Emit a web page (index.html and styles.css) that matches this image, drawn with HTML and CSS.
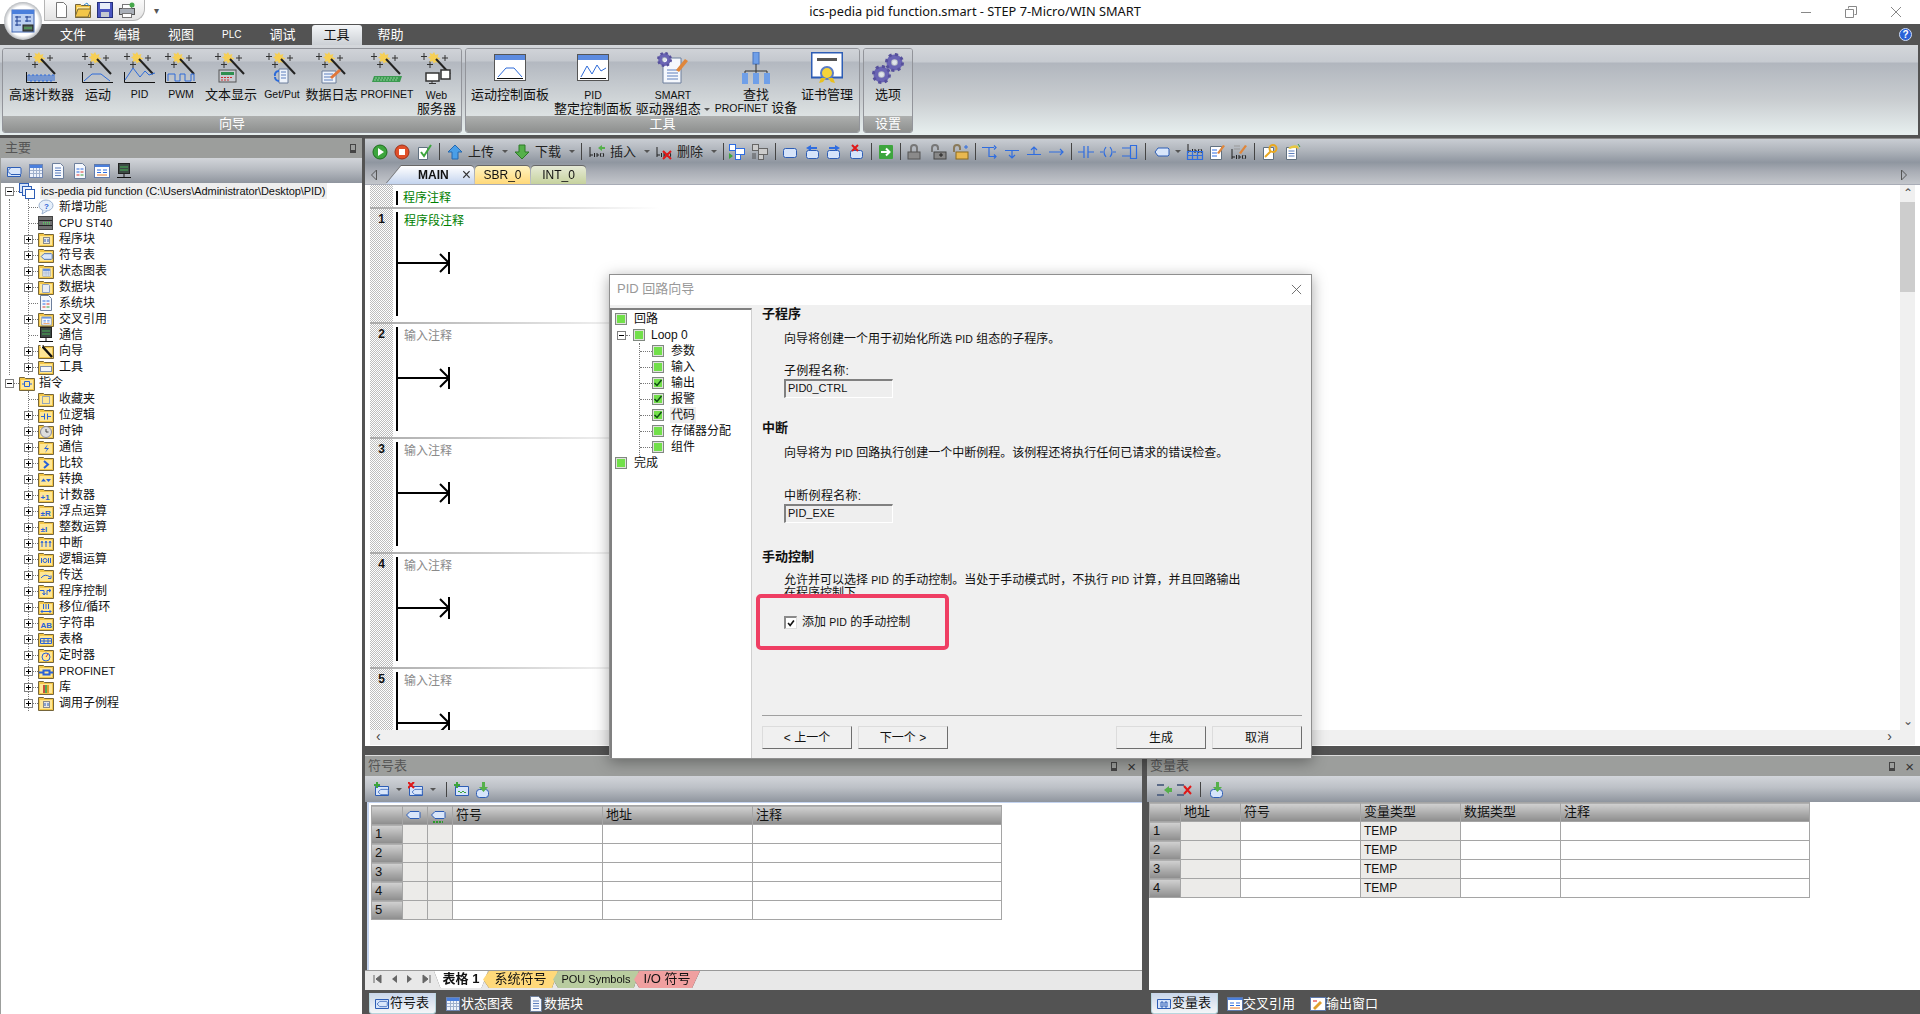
FILE: index.html
```html
<!DOCTYPE html>
<html lang="zh-CN">
<head>
    <meta charset="UTF-8">
    <title>ics-pedia pid function.smart - STEP 7-Micro/WIN SMART</title>
    <link rel="stylesheet" href="styles.css">
</head>
<body>
<svg class="sprite" aria-hidden="true">
    <symbol id="wand" viewBox="0 0 32 32">
        <path d="M3 1v7M0 4.500h6M9 9v7M6 12.500h6M24 3v6M21 6h6" stroke="#333" fill="none"/>
        <path d="M13 0l1.500 3 3-1-1 3 3 1.500-3 1.500 1 3-3-1L13 11.500 11.500 9l-3 1 1-3L7 5.500l2.500-1.500-1-3 3 1z" fill="#f6cf55"/>
        <path d="M15 7l14 15" stroke="#222" stroke-width="2"/>
    </symbol>
    <symbol id="axis" viewBox="0 0 32 32">
        <path d="M.5 20v10.500H31" stroke="#111" fill="none"/>
    </symbol>
    <symbol id="winchart" viewBox="0 0 32 32">
        <rect x=".5" y="2.500" width="31" height="26" fill="#fff" stroke="#555"/>
        <rect x="1" y="3" width="30" height="5" fill="#5c8be0"/>
        <path d="M3 26.500h26" stroke="#111"/>
    </symbol>
    <symbol id="gear" viewBox="0 0 20 20">
        <circle cx="10" cy="10" r="6" fill="none" stroke="#6a64b4" stroke-width="5"/>
        <circle cx="10" cy="10" r="8.500" fill="none" stroke="#56509c" stroke-width="3" stroke-dasharray="3.300 3.400"/>
        <circle cx="10" cy="10" r="2.500" fill="#dfe3ea"/>
    </symbol>
    <symbol id="folder" viewBox="0 0 16 16">
        <path d="M.5 2.500h5l1 1h9v12H.5z" fill="#f3c648" stroke="#75653a"/>
        <rect x="2" y="5" width="12" height="9" fill="#ffe795"/>
    </symbol>
    <symbol id="tag" viewBox="0 0 16 16">
        <path d="M1.500 8L5 4.500h9l1 1v5l-1 1H5z" fill="#d9e6fa" stroke="#2d5db5"/>
    </symbol>
    <symbol id="table" viewBox="0 0 16 16">
        <rect x="1.500" y="1.500" width="13" height="13" fill="#eef2fa" stroke="#6f86b2"/>
        <rect x="2" y="2" width="12" height="3" fill="#4a7fdc"/>
        <path d="M2 7.500h12M2 10.500h12M5.500 5v9M8.500 5v9M11.500 5v9" stroke="#9fb0cc"/>
    </symbol>
    <symbol id="doc" viewBox="0 0 16 16">
        <path d="M2.500 .5h8l3 3v12h-11z" fill="#f5f8fd" stroke="#6d7f9c"/>
        <path d="M5 5h6M5 7.500h6M5 10h6M5 12.500h6" stroke="#5d7fbd"/>
    </symbol>
    <symbol id="doccolor" viewBox="0 0 16 16">
        <path d="M2.500 .5h8l3 3v12h-11z" fill="#f5f8fd" stroke="#6d7f9c"/>
        <path d="M4.500 6h3M8.500 6h3M4.500 9h3" stroke="#2f6de0"/>
        <path d="M8.500 9h3M4.500 12h3" stroke="#e0392f"/>
        <path d="M8.500 12h3" stroke="#39a13a"/>
    </symbol>
    <symbol id="xref" viewBox="0 0 16 16">
        <rect x=".5" y="1.500" width="15" height="13" fill="#fff" stroke="#5f79aa"/>
        <rect x="1" y="2" width="14" height="2" fill="#4a7fdc"/>
        <path d="M3 7h4M9 7h4M3 9.500h4M9 9.500h4" stroke="#2f6de0"/>
        <path d="M3 12h10" stroke="#e87a2a"/>
    </symbol>
    <symbol id="comm" viewBox="0 0 16 16">
        <rect x="2.500" y=".5" width="11" height="10" fill="#3c4a44" stroke="#222"/>
        <path d="M4 4h8M4 7h8" stroke="#47b255"/>
        <path d="M8 11v3M1 14.500h14" stroke="#111"/>
    </symbol>
    <symbol id="step" viewBox="0 0 12 12">
        <rect x=".5" y=".5" width="11" height="11" fill="#dfe2dc" stroke="#808880"/>
        <rect x="2" y="2" width="8" height="8" fill="#72e04a"/>
    </symbol>
    <symbol id="stepdone" viewBox="0 0 12 12">
        <rect x=".5" y=".5" width="11" height="11" fill="#dfe2dc" stroke="#808880"/>
        <rect x="2" y="2" width="8" height="8" fill="#72e04a"/>
        <path d="M2.500 6l2.500 2.500L9.500 3" fill="none" stroke="#0c4a12" stroke-width="1.500"/>
    </symbol>
    <symbol id="ladder" viewBox="0 0 16 16">
        <path d="M1 3v10M1 11h3M5.500 9v4M8 9v4M8 11h2M12 9q-1.500 2 0 4M14 9q1.500 2 0 4" stroke="#222" fill="none"/>
    </symbol>
    <symbol id="windowblue" viewBox="0 0 16 16">
        <path d="M1.500 4.500h13v9h-13z" fill="#d6e4fa" stroke="#2d5db5"/>
    </symbol>
</svg>

<div class="logo">
    <svg viewBox="0 0 38 38"><rect x="8" y="8" width="22" height="22" fill="#bcd0f2" stroke="#3e64b0"/><rect x="8" y="8" width="22" height="4" fill="#4a7fdc"/><path d="M11 15h6M11 19h6M11 23h6M13 14v10M21 15h6M21 19h6M23 14v6" stroke="#1e3f90" fill="none"/><rect x="19" y="23" width="10" height="6" fill="#4f5f55" stroke="#222"/><path d="M20 26h8" stroke="#56c060"/></svg>
</div>

<header class="titlebar">
    <div class="qat">
        <svg class="ic16" viewBox="0 0 16 16"><path d="M3.500 .5h7l3 3v12h-10z" fill="#fff" stroke="#777"/></svg>
        <svg class="ic16" viewBox="0 0 16 16"><use href="#folder"/><path d="M3 7h13l-3 8H0z" fill="#f3c648" stroke="#7a6a3a"/><path d="M9 3l3-2 2 3" stroke="#3a8fd0" fill="none"/></svg>
        <svg class="ic16" viewBox="0 0 16 16"><rect x=".5" y=".5" width="15" height="15" fill="#4a55c0" stroke="#24307a"/><rect x="3" y="1" width="10" height="6" fill="#e8edf8"/><rect x="4" y="10" width="8" height="5" fill="#c4c8d0"/></svg>
        <svg class="ic16" viewBox="0 0 16 16"><rect x=".5" y="6.500" width="15" height="6" fill="#a9afb8" stroke="#555"/><rect x="3.500" y="2.500" width="9" height="4" fill="#fff" stroke="#777"/><rect x="3.500" y="11.500" width="9" height="4" fill="#fff" stroke="#777"/><circle cx="13" cy="3" r="2.500" fill="#46a84b"/></svg>
    </div>
    <span class="qat-more">▾</span>
    <div class="title">ics-pedia pid function.smart - STEP 7-Micro/WIN SMART</div>
    <div class="winbtns">
        <span class="winbtn"><svg viewBox="0 0 12 12"><path d="M1 6.500h10" stroke="#888"/></svg></span>
        <span class="winbtn"><svg viewBox="0 0 12 12"><path d="M3.500 2.500v-2h8v8h-2M.5 3.500h8v8h-8z" fill="none" stroke="#888"/></svg></span>
        <span class="winbtn"><svg viewBox="0 0 12 12"><path d="M1 1l10 10M11 1L1 11" stroke="#888"/></svg></span>
    </div>
</header>

<nav class="menubar">
    <span class="menu">文件</span>
    <span class="menu">编辑</span>
    <span class="menu">视图</span>
    <span class="menu menu-plc">PLC</span>
    <span class="menu">调试</span>
    <span class="menu menu-on">工具</span>
    <span class="menu">帮助</span>
    <span class="help">?</span>
</nav>

<section class="ribbon">
    <div class="rgroup rg-wizard">
        <div class="rbody">
            <div class="rbtn w71"><svg class="ic32" viewBox="0 0 32 32"><use href="#wand"/><use href="#axis"/><path d="M2 29v-6h2v6h2v-6h2v6h2v-6h2v6h2v-6h2v6h2v-6h2v6h2v-6h2v6h2v-6h2v6" fill="none" stroke="#2e6bd8"/></svg><span>高速计数器</span></div>
            <div class="rbtn w42"><svg class="ic32" viewBox="0 0 32 32"><use href="#wand"/><use href="#axis"/><path d="M2 29l8-7h9l9 7" fill="none" stroke="#2e6bd8"/></svg><span>运动</span></div>
            <div class="rbtn w41"><svg class="ic32" viewBox="0 0 32 32"><use href="#wand"/><use href="#axis"/><path d="M1 28l8-12 7 9 5-6 4 4 6-2" fill="none" stroke="#2e6bd8"/></svg><span class="lat">PID</span></div>
            <div class="rbtn w42"><svg class="ic32" viewBox="0 0 32 32"><use href="#wand"/><use href="#axis"/><path d="M3 29v-7h7v7h5v-7h5v7h6v-7h3v7" fill="none" stroke="#2e6bd8"/></svg><span class="lat">PWM</span></div>
            <div class="rbtn w58"><svg class="ic32" viewBox="0 0 32 32"><use href="#wand"/><rect x="4" y="18" width="17" height="12" fill="#c9ccd2" stroke="#555"/><rect x="6" y="20" width="13" height="3" fill="#2f8f4f"/><path d="M6 25.500h2m1 0h2m1 0h2m1 0h2M6 28h2m1 0h2m1 0h2" stroke="#c33"/></svg><span>文本显示</span></div>
            <div class="rbtn w44"><svg class="ic32" viewBox="0 0 32 32"><use href="#wand"/><path d="M13 17h9v14h-9z" fill="#eef3fb" stroke="#6d7f9c"/><path d="M15 20h5M15 23h5M15 26h5" stroke="#5d7fbd"/><path d="M9 24a4 4 0 0 1 4-5M13 29a4 4 0 0 1-4-4" stroke="#2e6bd8" stroke-width="2" fill="none"/></svg><span class="lat">Get/Put</span></div>
            <div class="rbtn w55"><svg class="ic32" viewBox="0 0 32 32"><use href="#wand"/><path d="M6 19h14v12H6z" fill="#eef3fb" stroke="#6d7f9c"/><path d="M8 22h9M8 25h9M8 28h9" stroke="#5d7fbd"/><path d="M14 25l9-8 2 2-9 8z" fill="#e0763a"/></svg><span>数据日志</span></div>
            <div class="rbtn w56"><svg class="ic32" viewBox="0 0 32 32"><use href="#wand"/><path d="M3 24h28l-2 6H1z" fill="#3b9a50"/><path d="M4 26h24M3 28h24" stroke="#8fd09a" stroke-dasharray="2 1"/></svg><span class="lat">PROFINET</span></div>
            <div class="rbtn w43"><svg class="ic32" viewBox="0 0 32 32"><use href="#wand"/><rect x="5" y="21" width="13" height="8" fill="#fff" stroke="#333" stroke-width="1.500"/><rect x="20" y="18" width="9" height="9" fill="#fff" stroke="#333" stroke-width="1.500"/><path d="M11 29v2M8 31.500h7" stroke="#333"/></svg><span><b class="lat">Web</b><br>服务器</span></div>
        </div>
        <div class="rlabel">向导</div>
    </div>
    <div class="rgroup rg-tools">
        <div class="rbody">
            <div class="rbtn w82"><svg class="ic32" viewBox="0 0 32 32"><use href="#winchart"/><path d="M4 25l8-9h8l8 9" fill="none" stroke="#2e6bd8"/></svg><span>运动控制面板</span></div>
            <div class="rbtn w84"><svg class="ic32" viewBox="0 0 32 32"><use href="#winchart"/><path d="M4 25l6-11 5 8 5-9 4 6 5-3" fill="none" stroke="#2e6bd8"/></svg><span><b class="lat">PID</b><br>整定控制面板</span></div>
            <div class="rbtn w76"><svg class="ic32" viewBox="0 0 32 32"><path d="M6 6h18v25H6z" fill="#f5f8fd" stroke="#6d7f9c"/><path d="M10 18h11M10 21h11M10 24h11M10 27h11" stroke="#5d7fbd"/><use href="#gear" width="15" height="15" x="0" y="0"/><path d="M19 18l9-11 3 2-9 11z" fill="#e0863a"/></svg><span><b class="lat">SMART</b><br>驱动器组态 <i class="caret"></i></span></div>
            <div class="rbtn w90"><svg class="ic32" viewBox="0 0 32 32"><rect x="13" y="0" width="6" height="12" fill="#6f9fe8" stroke="#4a76c0"/><path d="M16 12v7M5 19h22M5 19v3M16 19v3M27 19v3" stroke="#333" fill="none"/><rect x="2" y="21" width="6" height="11" fill="#6f9fe8"/><rect x="13" y="21" width="6" height="11" fill="#6f9fe8"/><rect x="24" y="21" width="6" height="11" fill="#6f9fe8"/></svg><span>查找<br><b class="lat">PROFINET</b> 设备</span></div>
            <div class="rbtn w52"><svg class="ic32" viewBox="0 0 32 32"><rect x=".5" y=".5" width="31" height="25" fill="#fff" stroke="#2d5db5" stroke-width="2"/><rect x="6" y="6" width="20" height="3" fill="#555"/><circle cx="16" cy="21" r="6" fill="#f5d33a" stroke="#5a7cc5" stroke-width="2"/><path d="M10 26l-2 5 4-1 3-4M22 26l2 5-4-1-3-4" fill="#e7c020"/></svg><span>证书管理</span></div>
        </div>
        <div class="rlabel">工具</div>
    </div>
    <div class="rgroup rg-set">
        <div class="rbody">
            <div class="rbtn w44"><svg class="ic32" viewBox="0 0 32 32"><use href="#gear" width="19" height="19" x="0" y="13"/><use href="#gear" width="19" height="19" x="13" y="1"/></svg><span>选项</span></div>
        </div>
        <div class="rlabel">设置</div>
    </div>
</section>

<main class="workspace">
    <aside class="nav">
        <div class="panehead"><span>主要</span><i class="pin"></i></div>
        <div class="paletools">
            <svg class="ic16" viewBox="0 0 16 16"><use href="#windowblue"/><use href="#tag"/></svg>
            <svg class="ic16" viewBox="0 0 16 16"><use href="#table"/></svg>
            <svg class="ic16" viewBox="0 0 16 16"><use href="#doc"/></svg>
            <svg class="ic16" viewBox="0 0 16 16"><use href="#doccolor"/></svg>
            <svg class="ic16" viewBox="0 0 16 16"><use href="#xref"/></svg>
            <svg class="ic16" viewBox="0 0 16 16"><use href="#comm"/></svg>
        </div>
        <div class="tree">
            <div class="row root"><i class="twist minus"></i><i class="dash"></i><svg class="ic16" viewBox="0 0 16 16"><rect x=".5" y=".5" width="9" height="9" fill="#d6e4fa" stroke="#2d5db5"/><rect x="3.500" y="3.500" width="9" height="9" fill="#eaf1fd" stroke="#2d5db5"/><rect x="6.500" y="6.500" width="9" height="9" fill="#fff" stroke="#2d5db5"/></svg><span class="name project">ics-pedia pid function (C:\Users\Administrator\Desktop\PID)</span></div>
            <div class="branch">
                <div class="inner">
                    <div class="row"><i class="dash long"></i><svg class="ic16" viewBox="0 0 16 16"><ellipse cx="8" cy="6.500" rx="7" ry="5.500" fill="#e6effa" stroke="#9db3d0"/><path d="M5 11l-1 4 5-3" fill="#e6effa" stroke="#9db3d0"/><text class="mark-text" x="6" y="10">?</text></svg><span class="name">新增功能</span></div>
                    <div class="row"><i class="dash long"></i><svg class="ic16" viewBox="0 0 16 16"><rect x=".5" y="1.500" width="14" height="13" fill="#707070" stroke="#444"/><path d="M1 5.500h13M1 10.500h13" stroke="#222"/><path d="M5 7.500h8M5 9h8" stroke="#57d060" stroke-dasharray="1 1"/></svg><span class="name lat-name">CPU ST40</span></div>
                    <div class="row"><i class="twist"></i><i class="dash"></i><svg class="ic16" viewBox="0 0 16 16"><use href="#folder"/><rect x="5.500" y="6.500" width="6" height="6" fill="#e7e7e7" stroke="#8a8a8a"/><path d="M7 8v3M10 8v3" stroke="#2d5db5"/></svg><span class="name">程序块</span></div>
                    <div class="row"><i class="twist"></i><i class="dash"></i><svg class="ic16" viewBox="0 0 16 16"><use href="#folder"/><use href="#tag" width="13" height="13" x="2" y="3"/></svg><span class="name">符号表</span></div>
                    <div class="row"><i class="twist"></i><i class="dash"></i><svg class="ic16" viewBox="0 0 16 16"><use href="#folder"/><use href="#table" width="11" height="9" x="3" y="5"/></svg><span class="name">状态图表</span></div>
                    <div class="row"><i class="twist"></i><i class="dash"></i><svg class="ic16" viewBox="0 0 16 16"><use href="#folder"/><path d="M4.500 5.500h6l1 1v7h-7z" fill="#e7ecf4" stroke="#8fa0bc"/></svg><span class="name">数据块</span></div>
                    <div class="row"><i class="dash long"></i><svg class="ic16" viewBox="0 0 16 16"><use href="#doccolor"/></svg><span class="name">系统块</span></div>
                    <div class="row"><i class="twist"></i><i class="dash"></i><svg class="ic16" viewBox="0 0 16 16"><use href="#folder"/><use href="#xref" width="11" height="10" x="3" y="5"/></svg><span class="name">交叉引用</span></div>
                    <div class="row"><i class="dash long"></i><svg class="ic16" viewBox="0 0 16 16"><use href="#comm"/></svg><span class="name">通信</span></div>
                    <div class="row"><i class="twist"></i><i class="dash"></i><svg class="ic16" viewBox="0 0 16 16"><use href="#folder"/><path d="M4 3l10 11" stroke="#111" stroke-width="2.500"/><path d="M2 3h3M3.500 1v4" stroke="#fff"/></svg><span class="name">向导</span></div>
                    <div class="row"><i class="twist"></i><i class="dash"></i><svg class="ic16" viewBox="0 0 16 16"><use href="#folder"/><rect x="2.500" y="7.500" width="11" height="5" fill="#f4f6fa" stroke="#7f90ad"/></svg><span class="name">工具</span></div>
                </div>
            </div>
            <div class="row root"><i class="twist minus"></i><i class="dash"></i><svg class="ic16" viewBox="0 0 16 16"><use href="#folder"/><path class="mk" d="M3 9h2M11 9h2M5.500 6.500h5v5h-5z"/></svg><span class="name">指令</span></div>
            <div class="branch noline">
                <div class="inner">
                    <div class="row"><i class="dash long"></i><svg class="ic16" viewBox="0 0 16 16"><use href="#folder"/><rect class="mk dotted" x="4.500" y="5.500" width="7" height="7"/></svg><span class="name">收藏夹</span></div>
                    <div class="row"><i class="twist"></i><i class="dash"></i><svg class="ic16" viewBox="0 0 16 16"><use href="#folder"/><path class="mk" d="M3 9.500h3M6.500 6.500v6M9.500 6.500v6M10 9.500h3"/></svg><span class="name">位逻辑</span></div>
                    <div class="row"><i class="twist"></i><i class="dash"></i><svg class="ic16" viewBox="0 0 16 16"><use href="#folder"/><circle cx="8" cy="9" r="5.500" fill="#ddd" stroke="#8a8a9a"/><path d="M8 6v3h2.500" stroke="#444" fill="none"/></svg><span class="name">时钟</span></div>
                    <div class="row"><i class="twist"></i><i class="dash"></i><svg class="ic16" viewBox="0 0 16 16"><use href="#folder"/><path d="M10 5L6 10h3l-2 4 4-5H8z" fill="#2a62d8"/></svg><span class="name">通信</span></div>
                    <div class="row"><i class="twist"></i><i class="dash"></i><svg class="ic16" viewBox="0 0 16 16"><use href="#folder"/><path class="mk thick" d="M6 6l4 3.500L6 13"/></svg><span class="name">比较</span></div>
                    <div class="row"><i class="twist"></i><i class="dash"></i><svg class="ic16" viewBox="0 0 16 16"><use href="#folder"/><path d="M3 10.500l2.500-3 2.500 3zM8 8h5l-2.500 3z" fill="#2a62d8"/></svg><span class="name">转换</span></div>
                    <div class="row"><i class="twist"></i><i class="dash"></i><svg class="ic16" viewBox="0 0 16 16"><use href="#folder"/><text class="mark-text" x="2.500" y="12.500">+1</text></svg><span class="name">计数器</span></div>
                    <div class="row"><i class="twist"></i><i class="dash"></i><svg class="ic16" viewBox="0 0 16 16"><use href="#folder"/><text class="mark-text" x="2.500" y="12.500">±R</text></svg><span class="name">浮点运算</span></div>
                    <div class="row"><i class="twist"></i><i class="dash"></i><svg class="ic16" viewBox="0 0 16 16"><use href="#folder"/><text class="mark-text" x="2.500" y="12.500">±I</text></svg><span class="name">整数运算</span></div>
                    <div class="row"><i class="twist"></i><i class="dash"></i><svg class="ic16" viewBox="0 0 16 16"><use href="#folder"/><path class="mk" d="M4 7v5M8 7v5M12 7v5M3 8l1-2 1 2M7 8l1-2 1 2M11 8l1-2 1 2"/></svg><span class="name">中断</span></div>
                    <div class="row"><i class="twist"></i><i class="dash"></i><svg class="ic16" viewBox="0 0 16 16"><use href="#folder"/><path class="mk" d="M3.500 7v5M10.500 7v5M12.500 7v5"/><circle class="mk" cx="7" cy="9.500" r="2"/></svg><span class="name">逻辑运算</span></div>
                    <div class="row"><i class="twist"></i><i class="dash"></i><svg class="ic16" viewBox="0 0 16 16"><use href="#folder"/><path class="mk" d="M3 11q4-5 9-1M10 11.500h3v-3"/></svg><span class="name">传送</span></div>
                    <div class="row"><i class="twist"></i><i class="dash"></i><svg class="ic16" viewBox="0 0 16 16"><use href="#folder"/><path class="mk" d="M2 7.500h4v4M4.500 10l1.500 2 1.500-2M9 12V7.500h4M11 6l2 1.500L11 9"/></svg><span class="name">程序控制</span></div>
                    <div class="row"><i class="twist"></i><i class="dash"></i><svg class="ic16" viewBox="0 0 16 16"><use href="#folder"/><path class="mk" d="M5.500 5v5M8 5v5M10.500 5v5M3 12.500h10M4.500 11L3 12.500 4.500 14M11.500 11l1.500 1.500-1.500 1.500"/></svg><span class="name">移位/循环</span></div>
                    <div class="row"><i class="twist"></i><i class="dash"></i><svg class="ic16" viewBox="0 0 16 16"><use href="#folder"/><text class="mark-text" x="2.500" y="12.500">AB</text></svg><span class="name">字符串</span></div>
                    <div class="row"><i class="twist"></i><i class="dash"></i><svg class="ic16" viewBox="0 0 16 16"><use href="#folder"/><path class="mk" d="M2.500 7.500h11v5h-11zM2.500 10h11M6 7.500v5M10 7.500v5"/></svg><span class="name">表格</span></div>
                    <div class="row"><i class="twist"></i><i class="dash"></i><svg class="ic16" viewBox="0 0 16 16"><use href="#folder"/><circle class="mk" cx="8" cy="10" r="4"/><path d="M8 10l2-3" stroke="#d33"/></svg><span class="name">定时器</span></div>
                    <div class="row"><i class="twist"></i><i class="dash"></i><svg class="ic16" viewBox="0 0 16 16"><use href="#folder"/><path class="mk thick" d="M1 9.500h4M5.500 7.500h6v4h-6zM11 9.500h4"/></svg><span class="name lat-name">PROFINET</span></div>
                    <div class="row"><i class="twist"></i><i class="dash"></i><svg class="ic16" viewBox="0 0 16 16"><use href="#folder"/><rect x="5" y="6" width="2" height="8" fill="#c9503a"/><rect x="7" y="6" width="2" height="8" fill="#5aa84f"/><rect x="9" y="6" width="2" height="8" fill="#e0a030"/></svg><span class="name">库</span></div>
                    <div class="row"><i class="twist"></i><i class="dash"></i><svg class="ic16" viewBox="0 0 16 16"><use href="#folder"/><rect x="5.500" y="6.500" width="6" height="6" fill="#e7e7e7" stroke="#8a8a8a"/><path d="M7 8v3M10 8v3" stroke="#2d5db5"/></svg><span class="name">调用子例程</span></div>
                </div>
            </div>
        </div>
    </aside>

    <div class="right">
        <section class="editor">
            <div class="edbar">
                <div class="toolbar">
                    <svg class="tb" viewBox="0 0 16 16"><circle cx="8" cy="8" r="7" fill="#3da53d" stroke="#1e6d1e"/><path d="M6 4l6 4-6 4z" fill="#fff"/></svg>
                    <svg class="tb" viewBox="0 0 16 16"><circle cx="8" cy="8" r="7" fill="#e0502a" stroke="#a0301a"/><rect x="5" y="5" width="6" height="6" fill="#fff"/></svg>
                    <svg class="tb" viewBox="0 0 16 16"><path d="M2.500 3.500h9v12h-9z" fill="#fff" stroke="#607080"/><path d="M5 8l3 4 7-11" fill="none" stroke="#3da53d" stroke-width="2"/></svg>
                    <i class="sep"></i>
                    <svg class="tb m1" viewBox="0 0 16 16"><path d="M8 1l7 7h-4v7H5V8H1z" fill="#4a9fe8" stroke="#2468b0"/></svg>
                    <span class="tbtext">上传</span><i class="dd"></i>
                    <svg class="tb" viewBox="0 0 16 16"><path d="M8 15l7-7h-4V1H5v7H1z" fill="#55b04a" stroke="#2e7a28"/></svg>
                    <span class="tbtext">下载</span><i class="dd"></i>
                    <i class="sep sm"></i>
                    <svg class="tb m2" viewBox="0 0 16 16"><use href="#ladder"/><path d="M13 1l-4 3 4 3v-2h3V3h-3z" fill="#55b04a"/></svg>
                    <span class="tbtext">插入</span><i class="dd"></i>
                    <svg class="tb" viewBox="0 0 16 16"><use href="#ladder"/><path d="M7 7l8 8M15 7l-8 8" stroke="#e01818" stroke-width="2"/></svg>
                    <span class="tbtext">删除</span><i class="dd"></i>
                    <i class="sep sm"></i>
                    <svg class="tb" viewBox="0 0 16 16"><rect x=".5" y=".5" width="6" height="6" fill="#fff" stroke="#2f6de0"/><rect x="6.500" y="4.500" width="9" height="6" fill="#fff" stroke="#2f6de0"/><rect x="6.500" y="10.500" width="5" height="5" fill="#fff" stroke="#2f6de0"/><path d="M0 9l4 3-4 3z" fill="#3da53d"/></svg>
                    <svg class="tb m1" viewBox="0 0 16 16"><rect x=".5" y=".5" width="6" height="6" fill="#ccc" stroke="#666"/><rect x="6.500" y="4.500" width="9" height="6" fill="#ccc" stroke="#666"/><rect x="6.500" y="10.500" width="5" height="5" fill="#ccc" stroke="#666"/><path d="M1 9v6M3 9v6" stroke="#555"/></svg>
                    <i class="sep"></i>
                    <svg class="tb" viewBox="0 0 16 16"><rect x="1.500" y="4.500" width="13" height="9" rx="2" fill="#d6e4fa" stroke="#2d5db5"/></svg>
                    <svg class="tb" viewBox="0 0 16 16"><rect x="2.500" y="6.500" width="12" height="8" rx="2" fill="#d6e4fa" stroke="#2d5db5"/><path d="M7 1L2 4l5 3V5h6V3H7z" fill="#2f6de0"/></svg>
                    <svg class="tb" viewBox="0 0 16 16"><rect x="1.500" y="6.500" width="12" height="8" rx="2" fill="#d6e4fa" stroke="#2d5db5"/><path d="M9 1l5 3-5 3V5H3V3h6z" fill="#2f6de0"/></svg>
                    <svg class="tb" viewBox="0 0 16 16"><rect x="2.500" y="6.500" width="12" height="8" rx="2" fill="#d6e4fa" stroke="#2d5db5"/><path d="M4 1l6 6M10 1L4 7" stroke="#e01818" stroke-width="2"/></svg>
                    <i class="sep"></i>
                    <svg class="tb" viewBox="0 0 16 16"><rect x="1" y="1" width="14" height="14" rx="1" fill="#3da53d"/><path d="M3 8h8M8 4.500L11.500 8 8 11.500" stroke="#fff" stroke-width="2" fill="none"/></svg>
                    <i class="sep sm"></i>
                    <svg class="tb" viewBox="0 0 16 16"><path d="M5 8V4a3 3 0 0 1 6 0v4" fill="none" stroke="#777" stroke-width="2"/><rect x="2" y="8" width="12" height="7" fill="#8a8a8a" stroke="#555"/></svg>
                    <svg class="tb m3" viewBox="0 0 16 16"><path d="M1 8V4a3 3 0 0 1 6 0v2" fill="none" stroke="#777" stroke-width="2"/><rect x="3" y="8" width="12" height="7" fill="#888" stroke="#444"/><path d="M8 11h4M10 9v4" stroke="#222"/></svg>
                    <svg class="tb" viewBox="0 0 16 16"><path d="M1 8V4a3 3 0 0 1 6 0v2" fill="none" stroke="#8a7a5a" stroke-width="2"/><rect x="3" y="8" width="12" height="7" fill="#e8b850" stroke="#8a6a20"/><path d="M11 3h4M13 1v4" stroke="#2f6de0"/></svg>
                    <i class="sep sm"></i>
                    <svg class="tb" viewBox="0 0 16 16"><path class="bl" d="M1 3.500h7v9h7M8 3.500h5M8 12.500h5M13 1.500l2 2-2 2M13 10.500l2 2-2 2"/></svg>
                    <svg class="tb m1" viewBox="0 0 16 16"><path class="bl" d="M1 6.500h14M8 6.500v7M5 11l3 3 3-3"/></svg>
                    <svg class="tb" viewBox="0 0 16 16"><path class="bl" d="M1 10.500h14M8 10.500v-7M5 6l3-3 3 3"/></svg>
                    <svg class="tb" viewBox="0 0 16 16"><path class="bl" d="M1 8h14M12 5l3 3-3 3"/></svg>
                    <i class="sep"></i>
                    <svg class="tb" viewBox="0 0 16 16"><path class="bl" d="M0 8h6M6 2v12M10 2v12M10 8h6"/></svg>
                    <svg class="tb" viewBox="0 0 16 16"><path class="bl" d="M0 8h3M13 8h3M6 3q-4 5 0 10M10 3q4 5 0 10"/></svg>
                    <svg class="tb" viewBox="0 0 16 16"><path class="bl" d="M0 4h8M0 12h8M8.500 1.500h6v13h-6z"/></svg>
                    <i class="sep"></i>
                    <svg class="tb m2" viewBox="0 0 16 16"><path d="M1 8l3-4h10l1 1v6l-1 1H4z" fill="#d9e6fa" stroke="#2d5db5"/></svg>
                    <i class="dd narrow"></i>
                    <svg class="tb m1" viewBox="0 0 16 16"><use href="#ladder" y="-4"/><path class="bl" d="M.5 7.500h15v8H.5zM.5 11.500h15M5.500 7.500v8M10.500 7.500v8"/></svg>
                    <svg class="tb" viewBox="0 0 16 16"><path d="M1.500 2.500h11v13h-11z" fill="#fff" stroke="#607080"/><path d="M3 6h5M3 9h5M3 12h5" stroke="#2f6de0"/><path d="M8 9l6-8 2 1-6 8z" fill="#e0863a"/></svg>
                    <svg class="tb" viewBox="0 0 16 16"><use href="#ladder" y="2"/><path d="M3 2h6M3 5h6" stroke="#999"/><path d="M8 9l6-8 2 1-6 8z" fill="#e0863a"/></svg>
                    <i class="sep"></i>
                    <svg class="tb m1" viewBox="0 0 16 16"><path d="M1.500 3.500h10v12h-10z" fill="#fff" stroke="#607080"/><circle cx="11" cy="4.500" r="3.500" fill="none" stroke="#e8a820" stroke-width="2"/><path d="M9 7l-6 6" stroke="#e8a820" stroke-width="2"/></svg>
                    <svg class="tb" viewBox="0 0 16 16"><path d="M2.500 3.500h10v12h-10z" fill="#fff" stroke="#607080"/><path d="M4.500 7h6M4.500 9.500h6M4.500 12h6" stroke="#5d7fbd"/><path d="M4 4q5-4 10-2l1 3q-5-2-9 0z" fill="#e8c840"/><path d="M14 0l2 3" stroke="#3da53d"/></svg>
                </div>
                <div class="tabline">
                    <svg class="tabarrow" viewBox="0 0 8 12"><path d="M6.500 1l-5 5 5 5z" fill="none" stroke="#555"/></svg>
                    <div class="ptabs">
                        <span class="ptab ptab-main"><b>MAIN</b><em>×</em></span>
                        <span class="ptab ptab-sbr">SBR_0</span>
                        <span class="ptab ptab-int">INT_0</span>
                    </div>
                    <svg class="tabarrow end" viewBox="0 0 8 12"><path d="M1.500 1l5 5-5 5z" fill="none" stroke="#555"/></svg>
                </div>
            </div>
            <div class="canvas">
                <div class="sheet">
                    <div class="progcomment"><span class="gutter"></span><span class="note green bar">程序注释</span></div>
                    <div class="network"><span class="gutter num">1</span><div class="rung"><span class="note green">程序段注释</span><svg class="wire" viewBox="0 0 52 22"><path d="M0 11h51M51 0v22M42 2l9 9-9 9" fill="none" stroke="#000" stroke-width="2"/></svg></div></div>
                    <div class="network"><span class="gutter num">2</span><div class="rung"><span class="note">输入注释</span><svg class="wire" viewBox="0 0 52 22"><path d="M0 11h51M51 0v22M42 2l9 9-9 9" fill="none" stroke="#000" stroke-width="2"/></svg></div></div>
                    <div class="network"><span class="gutter num">3</span><div class="rung"><span class="note">输入注释</span><svg class="wire" viewBox="0 0 52 22"><path d="M0 11h51M51 0v22M42 2l9 9-9 9" fill="none" stroke="#000" stroke-width="2"/></svg></div></div>
                    <div class="network"><span class="gutter num">4</span><div class="rung"><span class="note">输入注释</span><svg class="wire" viewBox="0 0 52 22"><path d="M0 11h51M51 0v22M42 2l9 9-9 9" fill="none" stroke="#000" stroke-width="2"/></svg></div></div>
                    <div class="network"><span class="gutter num">5</span><div class="rung"><span class="note">输入注释</span><svg class="wire" viewBox="0 0 52 22"><path d="M0 11h51M51 0v22M42 2l9 9-9 9" fill="none" stroke="#000" stroke-width="2"/></svg></div></div>
                </div>
                <div class="vscroll">
                    <span class="sbtn">⌃</span>
                    <span class="vthumb"></span>
                    <span class="vtrack"></span>
                    <span class="sbtn">⌄</span>
                </div>
            </div>
            <div class="hscroll"><span>‹</span><span>›</span></div>
        </section>

        <section class="docks">
            <div class="dock dock-left">
                <div class="panehead"><span>符号表</span><i class="pin"></i><i class="xclose">×</i></div>
                <div class="paletools dock-tools">
                    <svg class="ic16" viewBox="0 0 16 16"><use href="#windowblue"/><use href="#tag" width="12" height="12" x="3" y="4"/><path d="M3 0v6M0 3h6" stroke="#3da53d" stroke-width="2"/></svg><i class="dd"></i>
                    <svg class="ic16" viewBox="0 0 16 16"><use href="#windowblue"/><use href="#tag" width="12" height="12" x="3" y="4"/><path d="M0 0l6 6M6 0L0 6" stroke="#e01818" stroke-width="2"/></svg><i class="dd"></i>
                    <i class="sep"></i>
                    <svg class="ic16" viewBox="0 0 16 16"><use href="#windowblue"/><path d="M4 10q1-2 2 0t2 0 2 0 2 0" stroke="#3da53d" fill="none"/><path d="M3 0v6M0 3h6" stroke="#3da53d" stroke-width="2"/></svg>
                    <svg class="ic16" viewBox="0 0 16 16"><rect x="2.500" y="7.500" width="12" height="8" rx="3" fill="#d6e4fa" stroke="#2d5db5"/><path d="M8 0h3v5h3l-4.500 5L5 5h3z" fill="#55b04a"/></svg>
                </div>
                <div class="client">
                    <table class="grid grid-sym">
                        <tr><th></th><th><svg class="ic16" viewBox="0 0 16 16"><use href="#tag"/></svg></th><th><svg class="ic16" viewBox="0 0 16 16"><use href="#tag"/><path d="M3 15h10" stroke="#2a9a2a" stroke-width="2" stroke-dasharray="2 1"/></svg></th><th>符号</th><th>地址</th><th>注释</th></tr>
                        <tr><th>1</th><td class="ro"></td><td class="ro"></td><td></td><td></td><td></td></tr>
                        <tr><th>2</th><td class="ro"></td><td class="ro"></td><td></td><td></td><td></td></tr>
                        <tr><th>3</th><td class="ro"></td><td class="ro"></td><td></td><td></td><td></td></tr>
                        <tr><th>4</th><td class="ro"></td><td class="ro"></td><td></td><td></td><td></td></tr>
                        <tr><th>5</th><td class="ro"></td><td class="ro"></td><td></td><td></td><td></td></tr>
                    </table>
                </div>
                <div class="sheettabs">
                    <svg class="navarrow" viewBox="0 0 16 16"><path d="M4 4v8M11 4L6 8l5 4z" fill="#666" stroke="#666"/></svg>
                    <svg class="navarrow" viewBox="0 0 16 16"><path d="M11 4L6 8l5 4z" fill="#666"/></svg>
                    <svg class="navarrow" viewBox="0 0 16 16"><path d="M5 4l5 4-5 4z" fill="#666"/></svg>
                    <svg class="navarrow" viewBox="0 0 16 16"><path d="M12 4v8M5 4l5 4-5 4z" fill="#666" stroke="#666"/></svg>
                    <div class="stabs">
                        <span class="stab stab-on">表格 1</span>
                        <span class="stab stab-sys">系统符号</span>
                        <span class="stab stab-pou">POU Symbols</span>
                        <span class="stab stab-io">I/O 符号</span>
                    </div>
                </div>
                <div class="status">
                    <span class="stat stat-on"><svg class="ic16" viewBox="0 0 16 16"><use href="#windowblue"/><use href="#tag" width="12" height="12" x="2" y="3"/></svg>符号表</span>
                    <span class="stat"><svg class="ic16" viewBox="0 0 16 16"><use href="#table"/></svg>状态图表</span>
                    <span class="stat"><svg class="ic16" viewBox="0 0 16 16"><use href="#doc"/></svg>数据块</span>
                </div>
            </div>
            <div class="dock dock-right">
                <div class="panehead"><span>变量表</span><i class="pin"></i><i class="xclose">×</i></div>
                <div class="paletools dock-tools">
                    <svg class="ic16" viewBox="0 0 16 16"><path d="M1 3h7M1 13h7" stroke="#5a6a88" stroke-width="2"/><path d="M8 8l5-4v2h3v4h-3v2z" fill="#55b04a"/></svg>
                    <svg class="ic16" viewBox="0 0 16 16"><path d="M1 3h7M1 13h7" stroke="#5a6a88" stroke-width="2"/><path d="M8 4l7 8M15 4l-7 8" stroke="#e01818" stroke-width="2"/></svg>
                    <i class="sep"></i>
                    <svg class="ic16" viewBox="0 0 16 16"><rect x="2.500" y="7.500" width="12" height="8" rx="3" fill="#d6e4fa" stroke="#2d5db5"/><path d="M8 0h3v5h3l-4.500 5L5 5h3z" fill="#55b04a"/></svg>
                </div>
                <div class="client bare">
                    <table class="grid grid-var">
                        <tr><th></th><th>地址</th><th>符号</th><th>变量类型</th><th>数据类型</th><th>注释</th></tr>
                        <tr><th>1</th><td class="ro"></td><td></td><td class="ro">TEMP</td><td></td><td></td></tr>
                        <tr><th>2</th><td class="ro"></td><td></td><td class="ro">TEMP</td><td></td><td></td></tr>
                        <tr><th>3</th><td class="ro"></td><td></td><td class="ro">TEMP</td><td></td><td></td></tr>
                        <tr><th>4</th><td class="ro"></td><td></td><td class="ro">TEMP</td><td></td><td></td></tr>
                    </table>
                </div>
                <div class="status">
                    <span class="stat stat-on"><svg class="ic16" viewBox="0 0 16 16"><use href="#windowblue"/><path d="M5 7h2v5H5zM9 7h2v5H9z" fill="none" stroke="#2d5db5"/></svg>变量表</span>
                    <span class="stat"><svg class="ic16" viewBox="0 0 16 16"><use href="#xref"/></svg>交叉引用</span>
                    <span class="stat"><svg class="ic16" viewBox="0 0 16 16"><rect x=".5" y="1.500" width="15" height="13" fill="#fff" stroke="#5f79aa"/><path d="M3 12l7-7 2 2-7 7z" fill="#e0a030"/><path d="M3 5h4" stroke="#e01818"/></svg>输出窗口</span>
                </div>
            </div>
        </section>
    </div>
</main>

<div class="wizard">
    <div class="wiz-title"><span>PID 回路向导</span><svg viewBox="0 0 12 12"><path d="M1 1l10 10M11 1L1 11" stroke="#666"/></svg></div>
    <div class="wiz-body">
        <div class="wiz-tree">
            <div class="step top"><svg class="ic12" viewBox="0 0 12 12"><use href="#step"/></svg><span>回路</span></div>
            <div class="step loop"><i class="twist minus"></i><i class="dash tiny"></i><svg class="ic12" viewBox="0 0 12 12"><use href="#step"/></svg><span class="loopname">Loop 0</span></div>
            <div class="wiz-branch">
                <div class="step"><i class="dash wide"></i><svg class="ic12" viewBox="0 0 12 12"><use href="#step"/></svg><span>参数</span></div>
                <div class="step"><i class="dash wide"></i><svg class="ic12" viewBox="0 0 12 12"><use href="#step"/></svg><span>输入</span></div>
                <div class="step"><i class="dash wide"></i><svg class="ic12" viewBox="0 0 12 12"><use href="#stepdone"/></svg><span>输出</span></div>
                <div class="step"><i class="dash wide"></i><svg class="ic12" viewBox="0 0 12 12"><use href="#stepdone"/></svg><span>报警</span></div>
                <div class="step"><i class="dash wide"></i><svg class="ic12" viewBox="0 0 12 12"><use href="#stepdone"/></svg><span class="cur">代码</span></div>
                <div class="step"><i class="dash wide"></i><svg class="ic12" viewBox="0 0 12 12"><use href="#step"/></svg><span>存储器分配</span></div>
                <div class="step"><i class="dash wide"></i><svg class="ic12" viewBox="0 0 12 12"><use href="#step"/></svg><span>组件</span></div>
            </div>
            <div class="step top end"><svg class="ic12" viewBox="0 0 12 12"><use href="#step"/></svg><span>完成</span></div>
        </div>
        <div class="wiz-main">
            <h3>子程序</h3>
            <p>向导将创建一个用于初始化所选 <span class="pid">PID</span> 组态的子程序。</p>
            <label class="fld">子例程名称:</label>
            <div class="inp">PID0_CTRL</div>
            <h3 class="h-int">中断</h3>
            <p>向导将为 <span class="pid">PID</span> 回路执行创建一个中断例程。该例程还将执行任何已请求的错误检查。</p>
            <label class="fld fld-int">中断例程名称:</label>
            <div class="inp inp-int">PID_EXE</div>
            <h3 class="h-man">手动控制</h3>
            <p class="tight">允许并可以选择 <span class="pid">PID</span> 的手动控制。当处于手动模式时，不执行 <span class="pid">PID</span> 计算，并且回路输出<br>在程序控制下。</p>
            <div class="callout"><span class="chk"><svg viewBox="0 0 12 12"><path d="M2.500 6l2.500 3 4.500-6" fill="none" stroke="#111" stroke-width="2"/></svg></span><span>添加 <span class="pid">PID</span> 的手动控制</span></div>
            <div class="wiz-foot">
                <button>&lt; 上一个</button>
                <button>下一个 &gt;</button>
                <span class="spacer"></span>
                <button>生成</button>
                <button>取消</button>
            </div>
        </div>
    </div>
</div>
</body>
</html>
```

FILE: styles.css
```css
* {
    box-sizing: border-box;
}

body {
    margin: 0;
    width: 1920px;
    height: 1014px;
    display: flex;
    flex-direction: column;
    overflow: hidden;
    position: relative;
    background: #535353;
    color: #111;
    font: 12px/16px "Liberation Sans", "Noto Sans CJK SC", sans-serif;
}

i, em {
    font-style: normal;
}

.sprite {
    display: none;
}

.ic16 {
    width: 16px;
    height: 16px;
    flex: none;
}

.ic12 {
    width: 12px;
    height: 12px;
    flex: none;
}

.ic32 {
    width: 32px;
    height: 32px;
    flex: none;
}

/* title bar */
.logo {
    position: absolute;
    left: 4px;
    top: 2px;
    width: 38px;
    height: 38px;
    border-radius: 50%;
    background: radial-gradient(circle, #fff 55%, #b9bcc0 70%, #77797c 100%);
    z-index: 5;
}

.logo svg {
    width: 38px;
    height: 38px;
    display: block;
}

.titlebar {
    height: 24px;
    flex: none;
    display: flex;
    align-items: flex-start;
    background: #fff;
}

.qat {
    width: 101px;
    height: 21px;
    margin-left: 44px;
    padding-left: 8px;
    display: flex;
    align-items: center;
    gap: 6px;
    border: 1px solid #b5b5b5;
    border-top: 0;
    border-radius: 0 0 12px 0;
    background: linear-gradient(#fafafa, #e3e3e3);
}

.qat-more {
    width: 22px;
    text-align: center;
    margin-top: 3px;
    font-size: 10px;
    color: #555;
}

.title {
    flex: 1;
    text-align: center;
    font: 12.8px/22px "Noto Sans", sans-serif;
}

.winbtns {
    display: flex;
    margin-right: 2px;
}

.winbtn {
    width: 45px;
    height: 23px;
    display: flex;
    align-items: center;
    justify-content: center;
}

.winbtn svg {
    width: 12px;
    height: 12px;
}

/* menu */
.menubar {
    height: 21px;
    flex: none;
    display: flex;
    padding-left: 46px;
    background: #535353;
    color: #fff;
    font-size: 13px;
    line-height: 20px;
}

.menu {
    padding: 0 14px;
    margin-top: 1px;
}

.menu-plc {
    font-size: 10px;
}

.menu-on {
    margin-left: 2px;
    margin-right: 2px;
    padding: 0 12px;
    color: #111;
    background: linear-gradient(#f4f6f8, #ccd0d5);
    border-radius: 3px 3px 0 0;
}

.help {
    margin: 4px 8px 0 auto;
    width: 13px;
    height: 13px;
    border-radius: 50%;
    background: #2a62d8;
    border: 1px solid #cfdcf5;
    font: bold 10px/11px "Liberation Sans", sans-serif;
    text-align: center;
}

/* ribbon */
.ribbon {
    height: 90px;
    flex: none;
    display: flex;
    gap: 3px;
    padding: 3px 2px 2px;
    border-right: 2px solid #535353;
    background: linear-gradient(#d4d7db 0, #c7cbd1 17px, #b1b6be 18px, #c9cdd0 55px, #e6eeee 88px);
}

.rgroup {
    display: flex;
    flex-direction: column;
    border: 1px solid #92949a;
    border-radius: 3px;
    overflow: hidden;
}

.rg-wizard {
    width: 460px;
}

.rg-tools {
    width: 395px;
}

.rg-set {
    width: 50px;
}

.rbody {
    flex: 1;
    display: flex;
    padding: 3px 0 0 3px;
    background: linear-gradient(#d0d3d8 0, #c4c8ce 12px, #b3b8c0 13px, #dfe4e4 70px);
}

.rg-set .rbody {
    padding-left: 2px;
}

.rlabel {
    height: 16px;
    flex: none;
    text-align: center;
    color: #fff;
    font-size: 13px;
    line-height: 16px;
    background: linear-gradient(#adafae, #8e908f);
}

.rbtn {
    flex: none;
    display: flex;
    flex-direction: column;
    align-items: center;
    text-align: center;
    font-size: 13px;
    line-height: 13px;
    white-space: nowrap;
}

.rbtn > span {
    margin-top: 4px;
}

.rbtn .lat {
    font-size: 10.5px;
    font-weight: normal;
}

.w41 { width: 41px; }
.w42 { width: 42px; }
.w43 { width: 43px; }
.w44 { width: 44px; }
.w52 { width: 52px; }
.w55 { width: 55px; }
.w56 { width: 56px; }
.w58 { width: 58px; }
.w71 { width: 71px; }
.w76 { width: 76px; }
.w82 { width: 82px; }
.w84 { width: 84px; }
.w90 { width: 90px; }

.caret {
    display: inline-block;
    width: 0;
    height: 0;
    border: 3px solid transparent;
    border-top-color: #555;
    border-bottom: 0;
    vertical-align: middle;
}

/* workspace */
.workspace {
    flex: 1;
    display: flex;
    gap: 3px;
    padding-top: 3px;
    min-height: 0;
    background: #535353;
}

.nav {
    width: 362px;
    flex: none;
    background: #fff;
    border-left: 1px solid #9c9e9c;
}

.panehead {
    height: 20px;
    display: flex;
    align-items: center;
    gap: 8px;
    padding: 0 4px;
    background: #9c9e9c;
    color: #555;
    font-size: 13px;
}

.panehead span {
    flex: 1;
}

.pin {
    width: 6px;
    height: 9px;
    margin-right: 2px;
    border: 1px solid #444;
    border-bottom-width: 3px;
}

.xclose {
    font: 15px/15px "Liberation Sans", sans-serif;
    color: #333;
    margin-right: 2px;
}

.paletools {
    height: 25px;
    display: flex;
    align-items: center;
    gap: 6px;
    padding-left: 5px;
    background: linear-gradient(#d2d5da, #b8bcc2 45%, #8f959e);
}

/* tree */
.tree {
    padding: 0 0 0 4px;
}

.row {
    height: 16px;
    display: flex;
    align-items: center;
    white-space: nowrap;
}

.twist {
    width: 9px;
    height: 9px;
    flex: none;
    border: 1px solid #808080;
    background: linear-gradient(#000, #000) center / 5px 1px no-repeat, linear-gradient(#000, #000) center / 1px 5px no-repeat, #fff;
}

.twist.minus {
    background: linear-gradient(#000, #000) center / 5px 1px no-repeat, #fff;
}

.dash {
    width: 5px;
    flex: none;
    border-top: 1px dotted #777;
}

.dash.long {
    width: 9px;
}

.dash.tiny {
    width: 4px;
}

.dash.wide {
    width: 12px;
}

.name {
    margin-left: 5px;
}

.lat-name {
    font-size: 11px;
    letter-spacing: .1px;
}

.root .name {
    margin-left: 4px;
}

.project {
    margin-left: 5px !important;
    padding: 0 2px 0 1px;
    background: #eee;
    font-size: 11px;
    letter-spacing: -.08px;
}

.branch {
    margin-left: 4px;
    border-left: 1px dotted #777;
    padding-bottom: 7px;
}

.branch.noline {
    border-left-color: transparent;
}

.inner {
    margin-left: 18px;
    border-left: 1px dotted #777;
    padding-left: 0;
}

.inner .row:last-child {
    margin-bottom: -7px;
}

.inner .twist {
    margin-left: -5px;
}

.mk {
    fill: none;
    stroke: #2a62d8;
}

.mk.thick {
    stroke-width: 2;
}

.mk.dotted {
    stroke-dasharray: 1 1;
}

.mark-text {
    font: bold 8px "Liberation Sans", sans-serif;
    fill: #2a62d8;
}

/* right side */
.right {
    flex: 1;
    min-width: 0;
    display: flex;
    flex-direction: column;
}

.editor {
    height: 608px;
    flex: none;
    background: #fff;
}

.edbar {
    height: 47px;
    border-top: 1px solid #888;
    background: linear-gradient(#c9cdd3 0, #b0b5bc 25%, #8f96a0 52%, #a9adb5 72%, #c3c6cb 100%);
    border-bottom: 1px solid #a8acb6;
}

.toolbar {
    height: 25px;
    display: flex;
    align-items: center;
    padding-left: 4px;
    font-size: 13px;
}

.tb {
    width: 22px;
    height: 16px;
    flex: none;
}

.m1 {
    margin-left: 1px;
}

.m2 {
    margin-left: 2px;
}

.m3 {
    margin-left: 3px;
}

.bl {
    fill: none;
    stroke: #2f6de0;
    stroke-width: 1.200;
}

.tbtext {
    margin-left: 2px;
    color: #222;
}

.dd {
    width: 12px;
    height: 16px;
    margin-left: 5px;
    flex: none;
    display: flex;
    align-items: center;
    justify-content: center;
}

.dd::after {
    content: "";
    border-top: 3px solid #555;
    border-left: 3px solid transparent;
    border-right: 3px solid transparent;
}

.dd.narrow {
    margin-left: 0;
    width: 10px;
}

.sep {
    width: 8px;
    height: 17px;
    flex: none;
    background: linear-gradient(#444, #444) center / 1px 100% no-repeat;
}

.sep.sm {
    width: 6px;
}

.paletools .sep {
    height: 15px;
}

.tabline {
    height: 18px;
    margin-top: 2px;
    display: flex;
    align-items: flex-end;
    padding-left: 5px;
}

.tabarrow {
    width: 8px;
    height: 12px;
    margin-bottom: 3px;
    margin-right: 7px;
    flex: none;
}

.tabarrow.end {
    margin-left: auto;
    margin-right: 12px;
}

.ptabs {
    display: flex;
    filter: drop-shadow(0 -.5px .4px #666);
}

.ptab {
    height: 18px;
    display: flex;
    align-items: center;
    font-size: 12px;
    border-radius: 4px 4px 0 0;
    margin-right: 1px;
}

.ptab-main {
    width: 88px;
    padding-left: 32px;
    margin-left: 1px;
    clip-path: polygon(0 100%, 15px 0, 100% 0, 100% 100%);
    background: linear-gradient(#fff, #c4d4ee);
}

.ptab-main b {
    flex: 1;
}

.ptab-main em {
    font-size: 16px;
    margin-right: 3px;
    color: #333;
}

.ptab-sbr {
    width: 55px;
    justify-content: center;
    background: linear-gradient(#fff4c0, #ffd97a);
}

.ptab-int {
    width: 55px;
    justify-content: center;
    background: linear-gradient(#e6ead6, #c6d29e);
}

.canvas {
    height: 545px;
    display: flex;
    padding-right: 5px;
}

.sheet {
    flex: 1;
    min-width: 0;
    overflow: hidden;
    padding-left: 5px;
}

.gutter {
    width: 23px;
    flex: none;
    display: block;
    text-align: center;
    font-weight: bold;
    background: repeating-conic-gradient(#bdbdbd 0 25%, #fff 0 50%) 0 0 / 2px 2px;
}

.progcomment {
    height: 24px;
    display: flex;
    background: linear-gradient(90deg, #aaa, #fff 290px) 0 100% / 100% 2px no-repeat;
}

.progcomment .gutter {
    height: 22px;
}

.note {
    padding-left: 6px;
    color: #8a8a8a;
    line-height: 14px;
    display: block;
}

.green {
    color: #008000;
}

.bar {
    height: 14px;
    margin: 6px 0 0 3px;
    border-left: 2px solid #000;
    padding-left: 5px;
}

.network {
    height: 115px;
    display: flex;
    padding-bottom: 2px;
    background: linear-gradient(90deg, #aaa, #fff 290px) 0 100% / 100% 2px no-repeat;
}

.network .gutter {
    padding-top: 2px;
}

.rung {
    height: 104px;
    margin: 3px 0 0 3px;
    border-left: 2px solid #000;
}

.rung .note {
    padding-top: 2px;
    height: 16px;
}

.wire {
    display: block;
    width: 52px;
    height: 22px;
    margin-top: 24px;
}

.vscroll {
    width: 15px;
    flex: none;
    display: flex;
    flex-direction: column;
    background: #f0f0f0;
    font-size: 12px;
    line-height: 17px;
    text-align: center;
    color: #555;
}

.sbtn {
    height: 17px;
    flex: none;
}

.vthumb {
    height: 90px;
    flex: none;
    background: #cdcdcd;
}

.vtrack {
    flex: 1;
}

.hscroll {
    height: 15px;
    margin: 0 5px;
    padding: 0 23px 0 6px;
    display: flex;
    justify-content: space-between;
    background: #f0f0f0;
    color: #444;
    font-size: 14px;
    line-height: 13px;
}

/* bottom docks */
.docks {
    flex: 1;
    display: flex;
    gap: 5px;
    min-height: 0;
    padding-top: 9px;
}

.dock {
    display: flex;
    flex-direction: column;
}

.dock-left {
    width: 777px;
}

.dock-right {
    flex: 1;
}

.dock .panehead {
    height: 21px;
    border-top: 1px solid #ddd;
    padding-left: 3px;
    line-height: 18px;
}

.dock-tools {
    height: 26px;
    padding-left: 9px;
    padding-top: 1px;
    gap: 4px;
    background: linear-gradient(#d2d5da, #bcc0c6 45%, #8f959e);
}

.dock-tools .dd {
    width: 10px;
    margin-left: 0;
}

.client {
    flex: 1;
    min-height: 0;
    margin-left: 2px;
    padding: 2px 0 0 2px;
    background: #fff;
    border-left: 2px solid #c3d3ef;
    border-top: 1px solid #c3d3ef;
}

.client.bare {
    padding: 0;
    border: 0;
    margin-left: 2px;
}

.grid {
    border-collapse: collapse;
    table-layout: fixed;
    background: #fff;
}

.grid th, .grid td {
    height: 19px;
    padding: 0 3px;
    border: 1px solid #a5a5a5;
    font-size: 13px;
    font-weight: normal;
    text-align: left;
    line-height: 16px;
}

.grid th {
    background: linear-gradient(#d2d2d2, #8c8c8c);
}

.grid th svg {
    display: block;
    margin-left: -1px;
}

.ro {
    background: #ecebe9;
}

.grid-sym {
    width: 630px;
}

.grid-sym th:nth-child(1) { width: 31px; }
.grid-sym th:nth-child(2),
.grid-sym th:nth-child(3) { width: 25px; }
.grid-sym th:nth-child(4),
.grid-sym th:nth-child(5) { width: 150px; }
.grid-sym th:nth-child(6) { width: 249px; }

.grid-var {
    width: 660px;
}

.grid-var th:nth-child(1) { width: 31px; }
.grid-var th:nth-child(2) { width: 60px; }
.grid-var th:nth-child(3) { width: 120px; }
.grid-var th:nth-child(4),
.grid-var th:nth-child(5) { width: 100px; }
.grid-var th:nth-child(6) { width: 249px; }

.grid td.ro {
    font-size: 12px;
}

.sheettabs {
    height: 20px;
    flex: none;
    display: flex;
    align-items: flex-start;
    padding-left: 5px;
    background: #e8e8e8;
    border-top: 1px solid #999;
    font-size: 13px;
}

.navarrow {
    width: 16px;
    height: 16px;
    flex: none;
}

.stabs {
    display: flex;
    filter: drop-shadow(0 0 .5px #444);
}

.stab {
    height: 17px;
    line-height: 16px;
    text-align: center;
    margin-left: -5px;
    flex: none;
}

.stab-on {
    width: 54px;
    margin-left: 0;
    font-weight: bold;
    background: #fff;
    clip-path: polygon(0 0, 90% 0, 100% 0, 88% 100%, 12% 100%);
}

.stab-sys {
    width: 75px;
    background: #ffd97a;
    clip-path: polygon(8% 0, 100% 0, 92% 100%, 8% 100%, 0 50%);
}

.stab-pou {
    width: 86px;
    font-size: 11px;
    background: #b9cc9f;
    clip-path: polygon(6% 0, 100% 0, 94% 100%, 6% 100%, 0 50%);
}

.stab-io {
    width: 66px;
    background: #f0a0a0;
    clip-path: polygon(8% 0, 100% 0, 88% 100%, 8% 100%, 0 50%);
}

.status {
    height: 24px;
    flex: none;
    display: flex;
    align-items: flex-end;
    gap: 5px;
    padding-left: 4px;
    background: #535353;
    color: #fff;
    font-size: 13px;
}

.stat {
    height: 21px;
    display: flex;
    align-items: center;
    padding: 0 6px 0 4px;
}

.stat-on {
    color: #111;
    background: linear-gradient(#c9d6ea, #f4f6f8);
    border-radius: 0 0 3px 3px;
    border: 1px solid #b8d6de;
    border-top: 0;
}

/* wizard dialog */
.wizard {
    position: absolute;
    left: 609px;
    top: 274px;
    width: 703px;
    height: 485px;
    display: flex;
    flex-direction: column;
    background: #f0f0f0;
    border: 1px solid #8f8f8f;
    box-shadow: 0 3px 14px rgba(0, 0, 0, .35);
    z-index: 10;
}

.wiz-title {
    height: 30px;
    flex: none;
    display: flex;
    align-items: center;
    justify-content: space-between;
    padding: 0 9px 2px 7px;
    background: #fff;
    color: #999;
    font-size: 13px;
}

.wiz-title svg {
    width: 11px;
    height: 11px;
}

.wiz-body {
    flex: 1;
    min-height: 0;
    display: flex;
}

.wiz-tree {
    width: 142px;
    flex: none;
    margin-top: 3px;
    padding: 1px 0 0 3px;
    background: #fff;
    border-top: 2px solid #808080;
    border-left: 2px solid #808080;
    border-right: 1px solid #d0d0d0;
    white-space: nowrap;
}

.step {
    height: 16px;
    display: flex;
    align-items: center;
    gap: 0;
}

.step .ic12 {
    margin-right: 7px;
}

.step.loop {
    padding-left: 2px;
}

.step.loop .ic12 {
    margin-left: 3px;
    margin-right: 6px;
}

.loopname {
    color: #111;
    font-size: 12px;
}

.wiz-branch {
    margin-left: 24px;
    border-left: 1px dotted #777;
    margin-bottom: 7px;
}

.wiz-branch .step:last-child {
    margin-bottom: -7px;
}

.cur {
    background: #eee;
    padding: 0 1px;
    margin-left: -1px;
}

.wiz-main {
    flex: 1;
    min-width: 0;
    display: flex;
    flex-direction: column;
    padding-left: 10px;
    padding-right: 9px;
}

.wiz-main h3 {
    margin: 1px 0 0;
    font-size: 13px;
    line-height: 16px;
    font-weight: bold;
}

.wiz-main h3.h-int {
    margin-top: 22px;
}

.wiz-main h3.h-man {
    margin-top: 26px;
}

.wiz-main p {
    margin: 10px 0 0 22px;
    line-height: 14px;
}

.wiz-main p.tight {
    margin-top: 9px;
    line-height: 13px;
    height: 27px;
    white-space: nowrap;
}

.pid {
    font-size: 10.5px;
}

.fld {
    margin: 18px 0 0 22px;
    line-height: 14px;
    letter-spacing: .3px;
}

.fld-int {
    margin-top: 29px;
}

.inp {
    width: 109px;
    height: 19px;
    margin: 1px 0 0 22px;
    padding-left: 2px;
    background: #eee;
    border: 2px solid #808080;
    border-right: 1px solid #fff;
    border-bottom: 1px solid #fff;
    font-size: 11px;
    line-height: 15px;
}

.callout {
    width: 193px;
    height: 56px;
    margin: -7px 0 0 -6px;
    padding-left: 24px;
    display: flex;
    align-items: center;
    gap: 5px;
    position: relative;
    background: #f0f0f0;
    border: 4px solid #ef3e63;
    border-radius: 5px;
}

.chk {
    width: 13px;
    height: 13px;
    flex: none;
    background: #fff;
    border: 2px solid #8a8a8a;
    border-right: 1px solid #ddd;
    border-bottom: 1px solid #ddd;
}

.chk svg {
    display: block;
    width: 10px;
    height: 10px;
}

.wiz-foot {
    margin-top: auto;
    height: 43px;
    flex: none;
    display: flex;
    gap: 6px;
    padding-top: 10px;
    border-top: 1px solid #a0a0a0;
}

.wiz-foot button {
    width: 90px;
    height: 23px;
    padding: 0;
    font: inherit;
    color: #111;
    background: #f0f0f0;
    border: 1px solid #6e6e6e;
    border-top-color: #dcdcdc;
    border-left-color: #dcdcdc;
}

.spacer {
    flex: 1;
}
```
